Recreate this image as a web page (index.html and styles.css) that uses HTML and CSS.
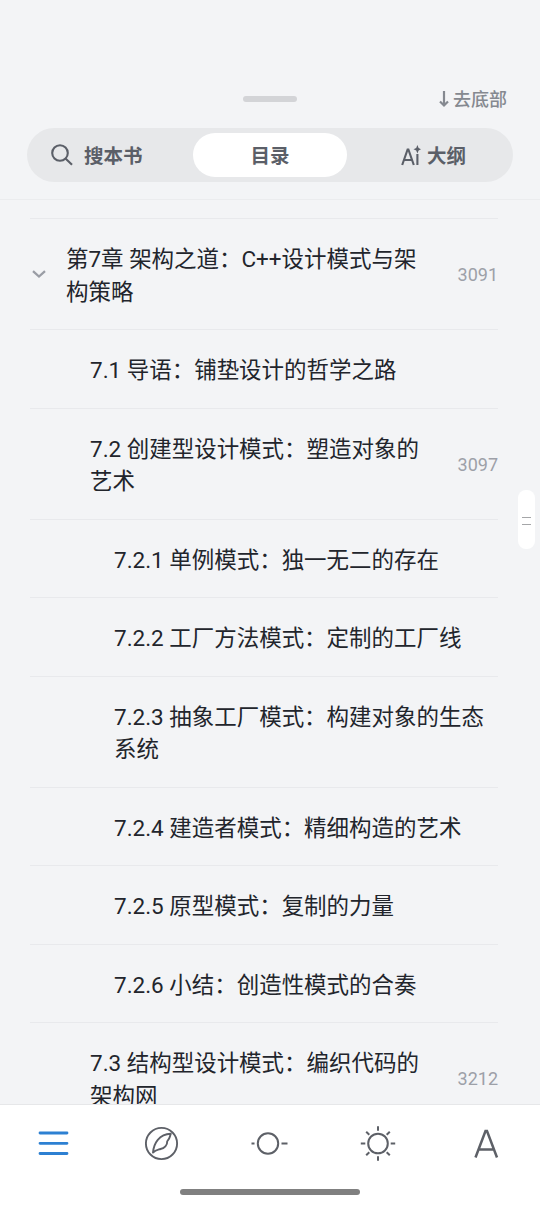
FILE: index.html
```html
<!DOCTYPE html>
<html lang="zh-CN">
<head>
<meta charset="utf-8">
<title>目录</title>
<link rel="stylesheet" href="styles.css">
</head>
<body>
<div class="app">
  <header class="header">
    <div class="topbar">
      <span></span>
      <span class="handle"></span>
      <div class="to-bottom">
        <svg class="arrow" width="10" height="17" viewBox="0 0 10 17"><path d="M5 0v14.500M1 10.500l4 4 4-4" fill="none" stroke="currentColor" stroke-width="2.200"/></svg>
        <span>去底部</span>
      </div>
    </div>
    <div class="tabs">
      <div class="tab tab-search">
        <svg width="22" height="22" viewBox="0 0 22 22"><g fill="none" stroke="currentColor" stroke-width="2.100"><circle cx="9" cy="9" r="7.8"/><path d="M14.5 14.5l6.5 6.3"/></g></svg>
        <span>搜本书</span>
      </div>
      <div class="tab tab-active"><span>目录</span></div>
      <div class="tab tab-outline">
        <svg width="20" height="21" viewBox="0 0 20 21"><g fill="none" stroke="currentColor" stroke-width="2.100"><path d="M1.200 20L6.600 4.500h.8L12.800 20M3.2 15h7.6M16.4 9v11"/></g><path d="M16.4 0l1.200 3 2.400 1.200-2.400 1.200-1.200 3-1.200-3-2.700-1.200 2.700-1.200z" fill="currentColor"/></svg>
        <span>大纲</span>
      </div>
    </div>
  </header>
  <main class="list">
    <div class="row level1">
      <svg class="chevron" width="14" height="9" viewBox="0 0 14 9"><path d="M1 1.2l6 5.3 6-5.3" fill="none" stroke="currentColor" stroke-width="2.300"/></svg>
      <div class="title">第7章 架构之道：C++设计模式与架<br>构策略</div><span class="page">3091</span>
    </div>
    <div class="row level2"><div class="title">7.1 导语：铺垫设计的哲学之路</div></div>
    <div class="row level2"><div class="title">7.2 创建型设计模式：塑造对象的<br>艺术</div><span class="page">3097</span></div>
    <div class="row level3"><div class="title">7.2.1 单例模式：独一无二的存在</div></div>
    <div class="row level3"><div class="title">7.2.2 工厂方法模式：定制的工厂线</div></div>
    <div class="row level3"><div class="title">7.2.3 抽象工厂模式：构建对象的生态<br>系统</div></div>
    <div class="row level3"><div class="title">7.2.4 建造者模式：精细构造的艺术</div></div>
    <div class="row level3"><div class="title">7.2.5 原型模式：复制的力量</div></div>
    <div class="row level3"><div class="title">7.2.6 小结：创造性模式的合奏</div></div>
    <div class="row level2"><div class="title">7.3 结构型设计模式：编织代码的<br>架构网</div><span class="page">3212</span></div>
  </main>
  <div class="scroll-thumb"><i></i><i></i></div>
  <footer class="footer">
    <nav class="nav">
      <svg class="active" width="40" height="40" viewBox="0 0 40 40"><path d="M6 10h27M6 20.300h27M6 30.500h27" stroke="currentColor" stroke-width="2.800" stroke-linecap="round"/></svg>
      <svg width="40" height="40" viewBox="0 0 40 40"><g fill="none" stroke="currentColor" stroke-width="1.900"><circle cx="19.500" cy="20.500" r="15.600"/><path d="M11 29.500C11.800 20.500 17 11 28.800 10.800C27.500 13.500 28.500 15 25.200 18.300C25.500 22 22.300 25.300 18.500 26C16 26.800 13.500 27 11 29.500Z" stroke-linejoin="round"/></g></svg>
      <svg width="40" height="40" viewBox="0 0 40 40"><g fill="none" stroke="currentColor" stroke-width="2"><circle cx="18" cy="20.500" r="10.200"/><path d="M1.500 20.500h3M31.500 20.500h6"/></g></svg>
      <svg width="40" height="40" viewBox="0 0 40 40"><g fill="none" stroke="currentColor" stroke-width="2"><circle cx="20" cy="20.500" r="9.800"/><path d="M20 3.300v4.500M20 33.200v4.500M2.800 20.500h4.500M32.700 20.500h4.500M8.200 8.700l3.100 3.100M28.700 29.200l3.100 3.100M8.200 32.300l3.100-3.100M28.700 11.800l3.100-3.100"/></g></svg>
      <svg width="40" height="40" viewBox="0 0 40 40"><path d="M9.500 34.500L19.500 8h1.500L31 34.500M13 26.500h14.500" fill="none" stroke="currentColor" stroke-width="2.500"/></svg>
    </nav>
    <div class="home-bar"></div>
  </footer>
</div>
</body>
</html>
```
FILE: styles.css
```css
* { box-sizing: border-box; }
body {
  margin: 0;
  font-family: Roboto, "Noto Sans CJK SC", sans-serif;
  background: #f3f4f6;
  color: #22252c;
}
svg { display: block; flex: none; }
.app {
  position: relative;
  width: 540px;
  height: 1206px;
  display: flex;
  flex-direction: column;
  overflow: hidden;
}
.header {
  flex: none;
  height: 200px;
  padding-top: 84px;
  border-bottom: 1px solid #ebecee;
}
.topbar {
  height: 30px;
  padding: 0 33px;
  display: grid;
  grid-template-columns: 1fr 54px 1fr;
  align-items: center;
}
.handle { height: 6px; border-radius: 3px; background: #d3d4d7; }
.to-bottom {
  display: flex;
  justify-content: flex-end;
  align-items: center;
  gap: 4px;
  font-size: 18px;
  line-height: 28px;
  padding-top: 2px;
  font-weight: 500;
  color: #858990;
}
.arrow { margin-top: -2px; }
.tabs {
  height: 54px;
  margin: 14px 27px 0;
  padding: 5px 0;
  border-radius: 27px;
  background: #e7e8ea;
  display: grid;
  grid-template-columns: 166px 154px 1fr;
  font-size: 19.5px;
  line-height: 28px;
  font-weight: 700;
  color: #5b5f68;
}
.tab { display: flex; align-items: center; }
.tab span { padding-top: 3px; }
.tab-search { padding-left: 24px; gap: 11px; }
.tab-active { justify-content: center; background: #fff; border-radius: 23px; }
.tab-outline { padding-left: 54px; gap: 6px; }
.list {
  flex: 1;
  min-height: 0;
  overflow: hidden;
  padding: 18px 42px 0 30px;
}
.row {
  display: flex;
  align-items: center;
  border-top: 1px solid #e8e9ec;
  padding: 24px 0 21px;
  font-size: 22.47px;
  line-height: 32.5px;
}
.title { white-space: nowrap; }
.chevron { margin: -2px 20px 0 2px; color: #9a9da5; }
.level2 { padding-left: 60px; }
.level3 { padding-left: 84px; }
.page { margin-left: auto; font-size: 18px; color: #9da0a8; }
.scroll-thumb {
  position: absolute;
  left: 518px;
  top: 490px;
  width: 17px;
  height: 59px;
  border-radius: 8px;
  background: #fff;
  display: flex;
  flex-direction: column;
  align-items: center;
  justify-content: center;
  gap: 6px;
  padding-top: 3px;
}
.scroll-thumb i { width: 9px; height: 1px; background: #a5a6a8; }
.footer {
  flex: none;
  height: 102px;
  background: #fff;
  border-top: 1px solid #e6e7e9;
}
.nav {
  height: 76px;
  display: grid;
  grid-template-columns: repeat(5, 1fr);
  place-items: center;
  color: #5d6067;
}
.active { color: #2d80d2; }
.home-bar { width: 180px; height: 6px; margin: 8px auto 0; border-radius: 3px; background: #808080; }
```
